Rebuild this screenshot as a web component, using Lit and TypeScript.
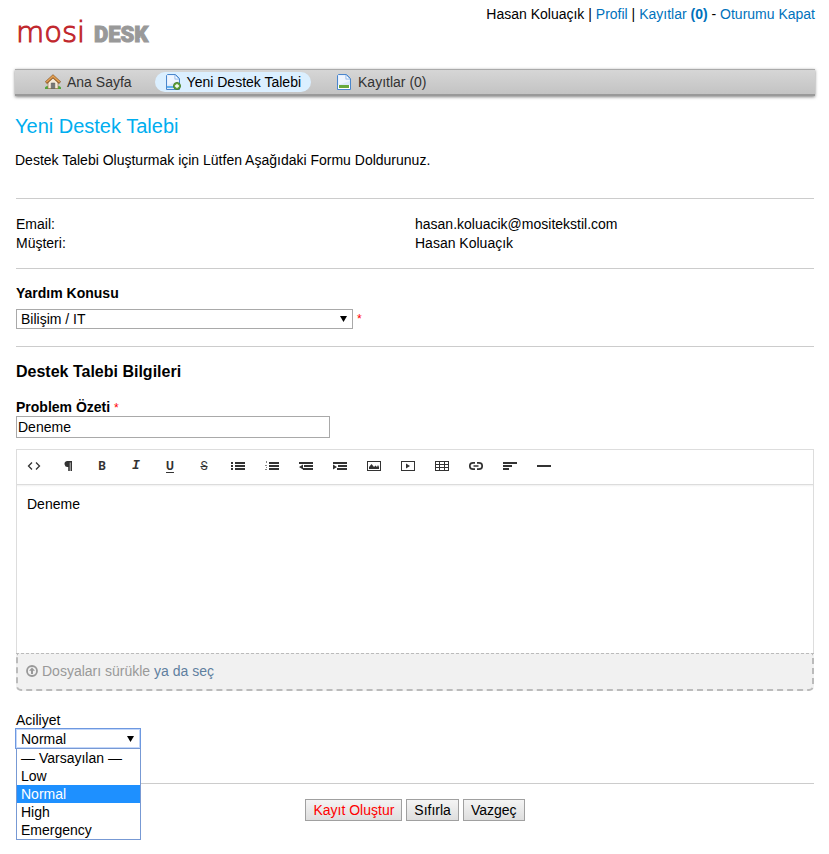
import { LitElement, html, css, svg } from "lit";
import { customElement, property, state } from "lit/decorators.js";
import { classMap } from "lit/directives/class-map.js";

const tools = [
  ["Kod", svg`<path d="M5 3.500 1.500 7 5 10.500M9 3.500 12.500 7 9 10.500" fill="none" stroke="currentColor" stroke-width="1.300"/>`],
  ["Biçim", svg`<path d="M6 2H11V12H9.500V3.500H8.800V12H7.200V8A3 3 0 0 1 6 2Z"/>`],
  ["Kalın", "B"],
  ["İtalik", "I"],
  ["Altı çizili", "U"],
  ["Üstü çizili", "S"],
  ["Madde listesi", svg`<path d="M0 3h2v2H0zM0 6h2v2H0zM0 9h2v2H0zM4 3h10v2H4zM4 6h10v2H4zM4 9h10v2H4z"/>`],
  ["Numaralı liste", svg`<path d="M4 3h10v2H4zM4 6h10v2H4zM4 9h10v2H4z"/><path d="M1 2h1v2H1zM0 6h2v1H0zM1 8h1v1H1zM0 10h2v1H0z" opacity=".6"/>`],
  ["Girintiyi azalt", svg`<path d="M0 3h14v2H0zM5 6h9v2H5zM4 9h10v2H4zM0 8 4 5.500v5z"/>`],
  ["Girintiyi artır", svg`<path d="M0 3h14v2H0zM5 6h9v2H5zM4 9h10v2H4zM4 8 0 5.500v5z"/>`],
  ["Resim", svg`<path d="M0 2h14v10H0zM1 3v8h12V3z" fill-rule="evenodd"/><path d="M2 10V8l2.500-3L7 8l1.500-1.500L10 8l1-2 1 2v2z"/>`],
  ["Video", svg`<path d="M0 2h14v10H0zM1 3v8h12V3z" fill-rule="evenodd"/><path d="M5 4.500 9 7 5 9.500z"/>`],
  ["Tablo", svg`<path d="M0 2h14v10H0zM1 3v2h3V3zM5 3v2h4V3zM10 3v2h3V3zM1 6v2h3V6zM5 6v2h4V6zM10 6v2h3V6zM1 9v2h3V9zM5 9v2h4V9zM10 9v2h3V9z" fill-rule="evenodd"/>`],
  ["Bağlantı", svg`<path d="M6 3.800H4a3.200 3.200 0 0 0 0 6.400h2M8 3.800h2a3.200 3.200 0 0 1 0 6.400H8M4.500 7h5" fill="none" stroke="currentColor" stroke-width="1.700"/>`],
  ["Hizala", svg`<path d="M0 3h14v2H0zM0 6h9v2H0zM0 9h6v2H0z"/>`],
  ["Çizgi", svg`<path d="M0 6h14v2H0z"/>`],
] as const;

const homeIcon = html`<svg class="icon" viewBox="0 0 16 16" aria-hidden="true">
  <path d="M0 13.500q1.500-2.500 3.500-1h9q2-1.500 3.500 1v1.500H0z" fill="#4fa53a"/>
  <path d="M3 8l5-4.800L13 8v6.500H3z" fill="#f5ead8" stroke="#a5794f" stroke-width=".7"/>
  <path d="M6.200 9h3.600v5.500H6.200z" fill="#777" stroke="#555" stroke-width=".5"/>
  <path d="M1 8.800 8 2.300l7 6.500" fill="none" stroke="#8d5a28" stroke-width="3"/>
  <path d="M1.300 8.300 8 2.100l6.700 6.200" fill="none" stroke="#e3a052" stroke-width="1.500"/></svg>`;

const page = svg`<path d="M2.500.5h8l4 4v11h-13v-14z" fill="#dce9fc" stroke="#4a86cc"/>
  <path d="M2.500 1.500H9V6h4.500v1L2.500 11z" fill="#eef5ff"/><path d="M10 1v4h4z" fill="#fff" stroke="#8ab4e6" stroke-width=".8"/>`;
const newIcon = html`<svg class="icon" viewBox="0 0 16 16" aria-hidden="true">${page}
  <path d="M2 13h8" stroke="#62b1f0" stroke-width="2"/>
  <circle cx="12" cy="12" r="3.500" fill="#6aa842" stroke="#467f2a"/><path d="M12 10v4M10 12h4" stroke="#fff" stroke-width="1.300"/></svg>`;
const listIcon = html`<svg class="icon" viewBox="0 0 16 16" aria-hidden="true">${page}
  <path d="M2 11h12v4H2z" fill="#fff"/><path d="M3 11h10v3H3z" fill="#68a93e"/></svg>`;

@customElement("desk-editor")
class DeskEditor extends LitElement {
  static styles = css`
    :host { display: block; margin-top: 11px; }
    .frame { border: 1px solid #ddd; border-bottom-color: #ccc; }
    .bar { display: flex; flex-wrap: wrap; height: 34px; }
    .tool { width: 34px; height: 32px; padding: 0; border: 0; background: none; color: #333;
      display: flex; align-items: center; justify-content: center; font: bold 12px/16px "Roboto", sans-serif; }
    .tool svg { width: 14px; height: 14px; fill: currentColor; }
    .i { font-style: italic; font-family: "Liberation Mono", monospace; font-size: 13px; }
    .u { text-decoration: underline; text-underline-offset: 2px; }
    .s { text-decoration: line-through; font-weight: normal; }
    .text { display: block; box-sizing: border-box; width: 100%; height: 169px; border: 0; outline: 0; resize: none;
      padding: 10px; font: 14px/20px "Liberation Sans", sans-serif; color: #000;
      background: linear-gradient(#dcdcdc 0 1px, #f0f0f0 1px, #fff 3px); }
    .drop { display: flex; align-items: center; gap: 4px; box-sizing: border-box; height: 38px; margin-top: -1px;
      padding: 0 8px 2px; background: #f1f1f1; color: #999; border: 2px dashed #bbb; border-top-width: 1px;
      border-radius: 0 0 5px 5px; line-height: 20px; }
    .drop svg { width: 12px; height: 12px; }
    .pick { color: #5f7f9f; text-decoration: none; }
  `;
  render() {
    return html`<div class="frame">
        <div class="bar" role="toolbar">
          ${tools.map(([name, glyph]) => html`<button type="button" title=${name}
            class=${classMap({ tool: true, i: glyph === "I", u: glyph === "U", s: glyph === "S" })}>
            ${typeof glyph === "string" ? glyph : html`<svg viewBox="0 0 14 14" aria-hidden="true">${glyph}</svg>`}
          </button>`)}
        </div>
        <textarea class="text" aria-label="Mesaj" .value=${"Deneme"}></textarea>
      </div>
      <div class="drop">
        <svg viewBox="0 0 12 12" aria-hidden="true"><circle cx="6" cy="6" r="5" fill="none" stroke="#999" stroke-width="1.800"/>
          <path d="M6 2.500 9 5.800H7V9H5V5.800H3z" fill="#999"/></svg>
        <span>Dosyaları sürükle <a class="pick" href="#">ya da seç</a></span>
      </div>`;
  }
}

@customElement("priority-select")
class PrioritySelect extends LitElement {
  @property() value = "Normal";
  @state() private open = true;
  static styles = css`
    :host { display: block; position: relative; width: 126px; margin-left: -1px; }
    .button, .option { display: block; width: 100%; text-align: left; color: #000; font: 14px/18px "Liberation Sans", sans-serif; }
    .button { display: flex; justify-content: space-between; align-items: center; box-sizing: border-box; height: 21px;
      padding: 0 6px 0 5px; background: #fff; border: 1px solid #6d98e0; outline: 0; box-shadow: inset 0 0 0 1px #c3d7fa; }
    .arrow { width: 7px; height: 6px; }
    .list { position: absolute; z-index: 1; top: 20px; left: 1px; right: 0; border: 1px solid #7799d4; background: #fff; }
    .option { border: 0; padding: 0 4px; background: #fff; }
    .chosen { background: #1e90ff; color: #fff; }
  `;
  private pick(v: string) {
    this.value = v;
    this.open = false;
  }
  render() {
    return html`<button type="button" class="button" aria-haspopup="listbox" aria-label="Aciliyet"
        aria-expanded=${this.open} @click=${() => (this.open = !this.open)}>${this.value}
        <svg class="arrow" viewBox="0 0 7 6" aria-hidden="true"><path d="M0 0h7L3.500 6z"/></svg></button>
      ${this.open ? html`<div class="list" role="listbox" aria-label="Aciliyet">
        ${["— Varsayılan —", "Low", "Normal", "High", "Emergency"].map((o) => html`<button type="button" role="option"
          aria-selected=${o === this.value} class=${classMap({ option: true, chosen: o === this.value })}
          @click=${() => this.pick(o)}>${o}</button>`)}
      </div>` : ""}`;
  }
}

@customElement("app-root")
class AppRoot extends LitElement {
  static styles = css`
    :host { display: block; box-sizing: border-box; min-height: 100vh; padding: 0 14px 32px 15px; background: #fff; color: #000;
      font: 14px/20px "Liberation Sans", sans-serif; }
    a { color: #0072bc; text-decoration: none; }
    .header { display: flex; justify-content: space-between; align-items: flex-start; min-height: 65px; padding-top: 4px; }
    .logo { width: 144px; height: 40px; margin-top: 8px; }
    .mosi { font: 200 29px "DejaVu Sans", sans-serif; fill: #c1272d; stroke: #c1272d; stroke-width: 1px; }
    .desk { font: 900 22px "Roboto", sans-serif; fill: #999; stroke: #999; stroke-width: 1px; }
    .nav { display: flex; align-items: center; gap: 4px; box-sizing: border-box; height: 27px; padding-left: 20px;
      border-top: 1px solid #aaa; border-bottom: 2px solid #999; background: linear-gradient(#d6d6d6, #c3c3c3);
      box-shadow: 0 1px 3px rgba(0, 0, 0, 0.5); }
    .nav a { display: flex; align-items: center; gap: 6px; height: 20px; padding: 0 10px; border-radius: 10px; color: #333; }
    .nav .active { background: #dbefff; color: #000; margin-right: 11px; }
    .nav a:first-child { margin-right: 9px; }
    .icon { width: 16px; height: 16px; }
    .title { margin: 18px 0 12px; font-weight: normal; font-size: 20px; line-height: 24px; color: #00aeef; }
    .intro { margin: 0 0 28px; }
    .form { padding: 0 1px; }
    .section { padding: 16px 0 15px; border-top: 1px solid #ccc; }
    .facts { width: 100%; border-collapse: collapse; }
    .facts th, .facts td { width: 50%; padding: 0; font-weight: normal; text-align: left; line-height: 19px; }
    .label { display: block; line-height: 16px; }
    .strong { font-weight: bold; }
    .req { color: #f00; font-weight: normal; font-size: 12px; }
    .pick { display: flex; align-items: flex-start; gap: 4px; height: 22px; margin-top: 8px; }
    .box { position: relative; display: flex; width: 337px; }
    .arrow { position: absolute; right: 6px; top: 7px; width: 7px; height: 6px; pointer-events: none; }
    .topic { appearance: none; width: 100%; height: 20px; border: 1px solid #a9a9a9; border-radius: 0; background: #fff;
      padding: 0 4px; color: #000; font: 14px/18px "Liberation Sans", sans-serif; }
    .subhead { margin: 0 0 18px; font-size: 16px; line-height: 18px; }
    .summary { display: block; box-sizing: border-box; width: 314px; height: 22px; border: 1px solid #a9a9a9; padding: 1px;
      font: 14px "Liberation Sans", sans-serif; color: #000; }
    .priority { margin-top: 21px; padding-bottom: 19px; }
    .actions { display: flex; justify-content: center; gap: 4px; padding-top: 15px; border-top: 1px solid #ccc; }
    .btn { height: 22px; padding: 0 7px; border: 1px solid #a0a0a0; border-radius: 0; color: #000;
      background: linear-gradient(#f4f4f4, #dedede); font: 14px/18px "Liberation Sans", sans-serif; }
    .send { color: #f00; }
  `;
  render() {
    return html`
      <header class="header">
        <svg class="logo" viewBox="0 0 144 40" role="img" aria-label="mosi DESK">
          <text class="mosi" x="1" y="30">mosi</text><text class="desk" x="79" y="30">DESK</text>
        </svg>
        <div>Hasan Koluaçık | <a href="#">Profil</a> | <a href="#">Kayıtlar <b>(0)</b></a> - <a href="#">Oturumu Kapat</a></div>
      </header>
      <nav class="nav">
        <a href="#">${homeIcon}Ana Sayfa</a>
        <a href="#" class="active">${newIcon}Yeni Destek Talebi</a>
        <a href="#">${listIcon}Kayıtlar (0)</a>
      </nav>
      <h1 class="title">Yeni Destek Talebi</h1>
      <p class="intro">Destek Talebi Oluşturmak için Lütfen Aşağıdaki Formu Doldurunuz.</p>
      <form class="form">
        <div class="section">
          <table class="facts">
            <tr><th scope="row">Email:</th><td>hasan.koluacik@mositekstil.com</td></tr>
            <tr><th scope="row">Müşteri:</th><td>Hasan Koluaçık</td></tr>
          </table>
        </div>
        <div class="section">
          <label class="label strong" for="topic">Yardım Konusu</label>
          <div class="pick">
            <div class="box">
              <select class="topic" id="topic"><option>Bilişim / IT</option></select>
              <svg class="arrow" viewBox="0 0 7 6" aria-hidden="true"><path d="M0 0h7L3.500 6z"/></svg>
            </div>
            <span class="req">*</span>
          </div>
        </div>
        <div class="section">
          <h3 class="subhead">Destek Talebi Bilgileri</h3>
          <label class="label strong" for="summary">Problem Özeti <span class="req">*</span></label>
          <input class="summary" id="summary" type="text" value="Deneme">
          <desk-editor></desk-editor>
          <div class="priority">
            <span class="label">Aciliyet</span>
            <priority-select></priority-select>
          </div>
        </div>
        <div class="actions">
          <button type="button" class="btn send">Kayıt Oluştur</button>
          <button type="reset" class="btn">Sıfırla</button>
          <button type="button" class="btn">Vazgeç</button>
        </div>
      </form>`;
  }
}
